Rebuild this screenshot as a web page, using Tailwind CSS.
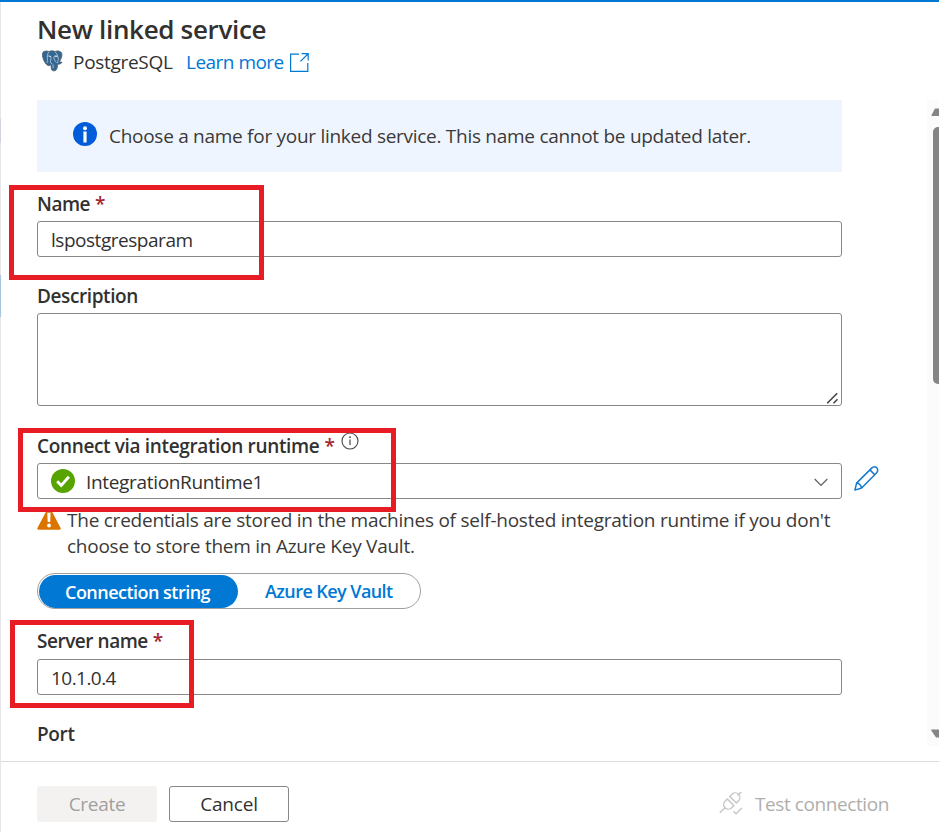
<!DOCTYPE html>
<html lang="en">
<head>
<meta charset="utf-8">
<title>New linked service</title>
<script src="https://cdn.jsdelivr.net/npm/@tailwindcss/browser@4"></script>
</head>
<body class="w-[939px] h-[832px] overflow-hidden bg-white font-['Open_Sans','Noto_Sans',sans-serif] text-[19px] leading-[26px] text-[#323130] whitespace-nowrap">
<div class="relative flex flex-col h-[832px] border-t-2 border-[#0078d4]">
  <div class="absolute left-0 top-0 w-px h-[830px] bg-[#e6e6ea]"></div>
  <div class="absolute left-0 top-[117px] w-px h-[24px] bg-[#d3d3e0]"></div>
  <div class="absolute left-0 top-[273px] w-px h-[42px] bg-[#a9c4e0]"></div>

  <header class="h-[98px] pl-[37px] pt-[9px]">
    <h1 class="text-[26px] leading-[36px] font-semibold tracking-[-0.32px]">New linked service</h1>
    <div class="flex items-center h-[28px] mt-px">
      <svg class="ml-[4px] w-[22px] h-[22px] mr-[10px] -mt-[3px]" viewBox="0 0 22 22">
        <path d="M2 2.200C4 .6 6.500 1 8 1.600 10 .5 12.500.8 14 1.500 16 .5 19.500.8 20.700 3c.7 2.500-.6 6-2.300 8.800.7.4 2 .3 2.500.4-.5 1.500-2.600 2.200-4.300 1.900-.3 2.500-.4 5.300-1.800 6.200-1.500 1-3.700.6-4.300-.9-.5-1.500-.3-3.400-.6-5-.8 1-2 1.700-3.200.9C3.500 13.500.2 6 2 2.200Z" fill="#336791" stroke="#54616d" stroke-width=".9"/>
        <path d="M8 1.900C6 4 6.200 7 6.500 9.500c.2 1.600-.7 2.600-.2 3.600M14 1.800c2.500 2.200 3.500 5.700 3.300 7.700-.2 1.500-1 2-.6 3.700M6.700 6.300c1.500-.8 3-.5 3.300.8.3 2-.8 3.800-.7 5.300.8.3 1.500.8 1.700 1.600M13 6.500c1-1 3-.8 3.900 0M13 6.500c-.4 3 1 4.500 2.500 6.200M12 14.300l.2 4" fill="none" stroke="#c3d3df" stroke-width=".8"/>
        <circle cx="9" cy="6.600" r=".7" fill="#fff"/><circle cx="15" cy="6.500" r=".7" fill="#fff"/>
      </svg>
      <span class="w-[114px] tracking-[-0.3px]">PostgreSQL</span>
      <span class="w-[104px] text-[#0078d4] tracking-[-0.52px] -ml-px">Learn more</span>
      <svg class="w-[19px] h-[19px]" viewBox="0 0 19 19" fill="none" stroke="#0078d4" stroke-width="1.200"><path d="M9 1.100H.6v17.300h17.200V10M11.500.7h6.700v6.700M17.900 1l-7.400 7.400"/></svg>
    </div>
  </header>

  <main class="flex h-[661px] overflow-hidden">
    <div class="w-[890px] pl-[37px]">
      <div class="w-[805px] h-[72px] bg-[#eff5ff] flex items-center pl-[36px] text-[#3b3a39]">
        <svg class="w-[24px] h-[24px] mr-[12px] -mt-[4px]" viewBox="0 0 24 24"><circle cx="12" cy="12" r="12" fill="#015cda"/><circle cx="12" cy="6.200" r="2" fill="#fff"/><rect x="10.400" y="9.500" width="3.200" height="11" fill="#fff"/></svg>
        <span class="tracking-[-0.28px]">Choose a name for your linked service. This name cannot be updated later.</span>
      </div>

      <div class="h-[49px] pt-[19px] font-semibold"><span class="tracking-[-0.5px]">Name</span><span class="ml-[5px] text-[#a4262c]">*</span></div>
      <div class="w-[805px] h-[36px] border border-[#8a8886] rounded-[3px] pl-[13px] pt-[5px]"><div class="h-[24px] overflow-hidden tracking-[-0.47px]">lspostgresparam</div></div>

      <div class="h-[56px] pt-[26px] font-semibold tracking-[-0.4px]">Description</div>
      <div class="w-[805px] h-[93px] border border-[#8a8886] rounded-[3px] flex items-end justify-end">
        <svg class="w-[13px] h-[12px] mr-[2px] mb-[1px]" viewBox="0 0 13 12" stroke="#444" stroke-width="1.600"><path d="M1.200 11.200 11.200 1.200M7.500 11.200l4-4"/></svg>
      </div>

      <div class="h-[57px] pt-[27px] font-semibold flex items-start"><span class="tracking-[-0.35px]">Connect via integration runtime</span><span class="ml-[5px] text-[#a4262c]">*</span>
        <svg class="w-[18px] h-[18px] ml-[6px] -mt-px" viewBox="0 0 18 18"><circle cx="9" cy="9" r="8" fill="none" stroke="#484644" stroke-width="1.100"/><path d="M9 7.500v5.500" stroke="#484644" stroke-width="1.200"/><circle cx="9" cy="5.200" r=".9" fill="#484644"/></svg>
      </div>
      <div class="flex items-center h-[36px]">
        <div class="w-[805px] h-[36px] border border-[#8a8886] rounded-[3px] flex items-center pl-[13px]">
          <svg class="w-[24px] h-[24px] mr-[11px]" viewBox="0 0 24 24"><circle cx="12" cy="12" r="12" fill="#57a300"/><path d="m6.200 12.300 4 4.100 7.700-8.700" fill="none" stroke="#fff" stroke-width="2.900"/></svg>
          <span class="pt-[2px] tracking-[-0.33px]">IntegrationRuntime1</span>
          <svg class="w-[14px] h-[9px] ml-auto mr-[13px] mt-[3px]" viewBox="0 0 14 9" fill="none" stroke="#605e5c" stroke-width="1.200"><path d="m.7 1 6.300 6.500L13.300 1"/></svg>
        </div>
        <svg class="w-[25px] h-[25px] ml-[12px] -mt-[6px]" viewBox="0 0 25 25" fill="none" stroke="#1478cf" stroke-width="1.500" stroke-linejoin="round"><path d="M.9 24.100 2.600 17.100 17.900 1.900c1.300-1.300 3.500-1.400 4.800-.1s1.300 3.600 0 4.900L7.600 22Z"/><path d="M2.600 17.100c2.400.3 4.400 2.400 5 4.900M15.900 3.900l4.900 4.900"/></svg>
      </div>
      <div class="flex pt-[8px]">
        <svg class="w-[24px] h-[23px] mr-[6px]" viewBox="0 0 24 23"><path d="M11 .9c.5-.9 1.600-.9 2.100 0l10.500 20c.5 1-.1 1.800-1.100 1.800H1.500c-1 0-1.600-.9-1.100-1.800Z" fill="#db7500"/><path d="M10.300 5.800h3.300L13.200 15h-2.500Z" fill="#fff"/><circle cx="12" cy="18.500" r="1.900" fill="#fff"/></svg>
        <div class="h-[52px] text-[#3b3a39]"><div class="tracking-[-0.24px]">The credentials are stored in the machines of self-hosted integration runtime if you don't</div><div class="tracking-[-0.255px]">choose to store them in Azure Key Vault.</div></div>
      </div>

      <div class="mt-[14px] w-[384px] h-[36px] border border-[#a19f9d] rounded-full flex items-center text-[18px] font-semibold">
        <div class="ml-px w-[199px] h-[33px] rounded-full bg-[#0078d4] text-white pl-[26px] leading-[34px] tracking-[-0.52px]">Connection string</div>
        <div class="pl-[27px] leading-[34px] text-[#0078d4] tracking-[-0.57px]">Azure Key Vault</div>
      </div>

      <div class="h-[50px] pt-[19px] font-semibold"><span class="tracking-[-0.47px]">Server name</span><span class="ml-[5px] text-[#a4262c]">*</span></div>
      <div class="w-[805px] h-[36px] border border-[#8a8886] rounded-[3px] pl-[13px] pt-[5px] tracking-[-0.55px]">10.1.0.4</div>
      <div class="pt-[26px] font-semibold tracking-[-0.35px]">Port</div>
    </div>

    <div class="ml-[37px] w-[12px] h-[646px] bg-[#fbfbfb] pl-[4px] pt-[7px] flex flex-col">
      <svg class="w-[8px] h-[10px]" viewBox="0 0 8 10"><path d="M4 1.500h4v7.500H.8q-.8-.5 0-1.500Z" fill="#858585"/></svg>
      <div class="ml-[2px] mt-[10px] w-[6px] h-[257px] rounded-l-[5px] bg-[#858585]"></div>
      <svg class="w-[8px] h-[10px] mt-[345px]" viewBox="0 0 8 10"><path d="M.8.500H8V8.500H5L.3 1.500Q0 .7.8.500Z" fill="#858585"/></svg>
    </div>
  </main>

  <footer class="h-[71px] border-t border-[#dcdcdc] flex items-start pl-[37px] pt-[24px]">
    <div class="w-[120px] h-[36px] rounded-[3px] bg-[#f3f2f1] text-[#a19f9d] text-center leading-[36px] tracking-[-0.3px]">Create</div>
    <div class="ml-[12px] w-[120px] h-[36px] rounded-[3px] border border-[#8a8886] text-center leading-[34px] tracking-[-0.22px]">Cancel</div>
    <svg class="ml-[430px] mt-[5px] w-[25px] h-[25px]" viewBox="0 0 25 25" fill="none" stroke="#c8c6c4" stroke-width="1.400"><path d="M.8 21.800 5.800 16.900M18.500 4.600 22.300.9M8.300 8 14.800 14.500l-2.400 2.400a4.600 4.600 0 0 1-6.500-6.500ZM10.900 5.400 17.400 11.900l2.300-2.300a4.600 4.600 0 0 0-6.500-6.500ZM14.500 20.200l2.600 2.500 5.700-5.700"/></svg>
    <span class="ml-[11px] mt-[5px] text-[#b0aeac] tracking-[-0.41px]">Test connection</span>
  </footer>

  <div class="absolute left-[9px] top-[183px] w-[255px] h-[95px] border-[5px] border-[#e81c24]"></div>
  <div class="absolute left-[18px] top-[426px] w-[378px] h-[84px] border-[5px] border-[#e81c24]"></div>
  <div class="absolute left-[10px] top-[618px] w-[184px] h-[88px] border-[5px] border-[#e81c24]"></div>
</div>
</body>
</html>
